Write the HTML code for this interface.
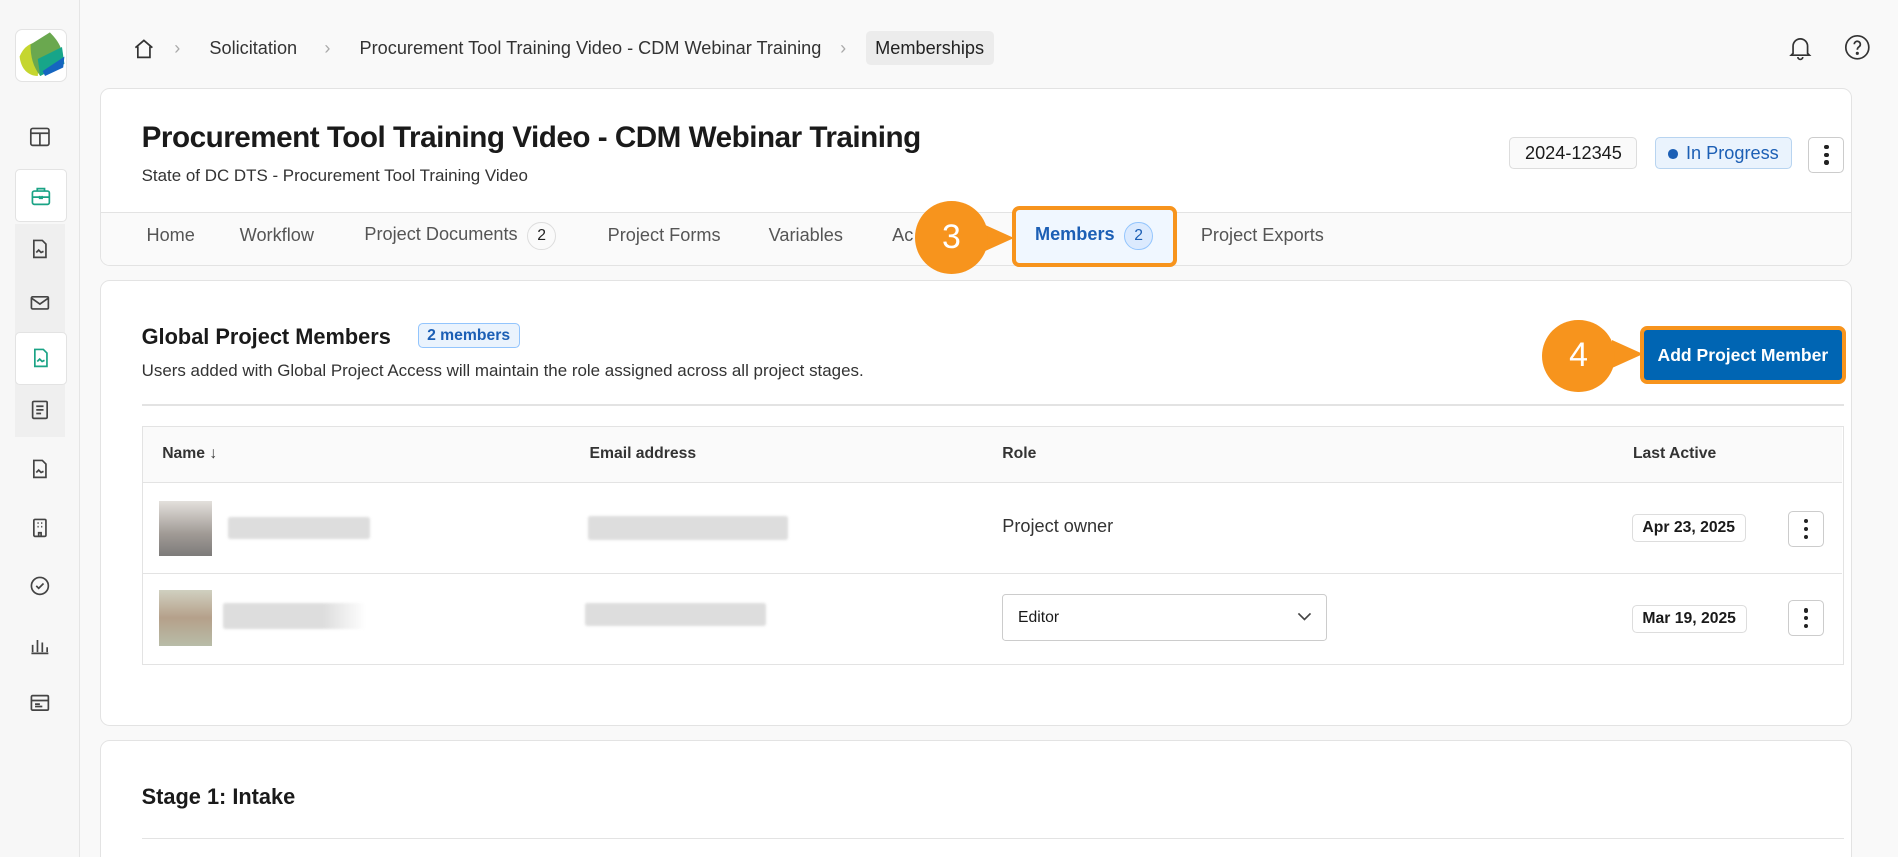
<!DOCTYPE html>
<html><head><meta charset="utf-8"><style>
html,body{margin:0;padding:0;width:1898px;height:857px;overflow:hidden;background:#f9f9f9;font-family:"Liberation Sans",sans-serif;color:#1a1a1a}
#w{zoom:1.2105;width:1568px;height:708px;position:relative}
.a{position:absolute}
.side{left:0;top:0;width:65px;height:708px;background:#f7f7f7;border-right:1px solid #e5e5e5}
.ic{position:absolute;left:12px;width:42px;height:42px;display:flex;align-items:center;justify-content:center}
.ic svg{width:18px;height:18px;fill:none;stroke:#444;stroke-width:1.4}
.card{background:#fff;border:1px solid #e3e3e3;border-radius:8px}
.bc{top:31px;font-size:15px;color:#333}
.tab{top:186px;font-size:15px;color:#555}
.badge{display:inline-block;width:22px;height:22px;border:1px solid #ddd;border-radius:50%;text-align:center;line-height:22px;font-size:13px;margin-left:8px;color:#222}
.th{top:368px;font-size:13px;font-weight:bold;color:#333}
.blur{background:#ddd;border-radius:2px;filter:blur(1px)}
.date{font-size:13px;font-weight:bold;border:1px solid #ddd;border-radius:4px;padding:3px 8px;background:#fff}
.dots{width:28px;height:28px;border:1px solid #ccc;border-radius:4px;background:#fff;display:flex;flex-direction:column;align-items:center;justify-content:center;gap:3px}
.dots i{width:3.5px;height:3.5px;background:#222;border-radius:50%;display:block}
.pin{background:#f7941d;border-radius:50%;width:60px;height:60px;color:#fff;font-size:28px;display:flex;align-items:center;justify-content:center}
</style></head><body><div id="w">
<div class="a side"></div>
<div class="a" style="left:12px;top:24px;width:42px;height:42px;border:1px solid #e3e3e3;border-radius:6px;background:#fff;overflow:hidden">
<svg width="42" height="42" viewBox="0 0 42 42"><path d="M3 22 C6 14 12 10 20 10 L18 38 C10 38 4 32 3 22Z" fill="#c5d62f"/><path d="M12 12 L28 2 C36 10 40 18 38 28 L20 38 C14 30 12 22 12 12Z" fill="#6aa84f"/><path d="M18 24 L38 14 L40 28 L20 38Z" fill="#17a589"/><path d="M22 34 L40 22 L39 31 L24 38Z" fill="#1565c0"/></svg></div>
<div class="ic" style="top:92px"><svg viewBox="0 0 18 18"><rect x="1.5" y="2" width="15" height="14" rx="1.5"/><path d="M1.5 6h15M9 6v10"/></svg></div>
<div class="ic" style="top:140px;background:#fff;border:1px solid #e3e3e3;border-radius:4px"><svg viewBox="0 0 18 18" style="stroke:#1aa385"><rect x="2" y="5" width="14" height="11" rx="1.5"/><path d="M6 5V3h6v2M2 10h14M8 9v2h2V9"/></svg></div>
<div class="a" style="left:12px;top:185px;width:42px;height:176px;background:#efefef"></div>
<div class="ic" style="top:185px"><svg viewBox="0 0 18 18"><path d="M4 2h7l3 3v11H4z M6 12l2-2 2 2 2-1"/></svg></div>
<div class="ic" style="top:229px"><svg viewBox="0 0 18 18"><rect x="2" y="4" width="14" height="10" rx="1"/><path d="M2 5l7 5 7-5"/></svg></div>
<div class="ic" style="top:274px;background:#fff;border:1px solid #e3e3e3;border-radius:4px"><svg viewBox="0 0 18 18" style="stroke:#1aa385"><path d="M4 2h7l3 3v11H4z M6 12l2-2 2 2 2-1"/></svg></div>
<div class="ic" style="top:318px"><svg viewBox="0 0 18 18"><rect x="3" y="2" width="12" height="14" rx="1"/><path d="M6 6h6M6 9h6M6 12h4"/></svg></div>
<div class="ic" style="top:366px"><svg viewBox="0 0 18 18"><path d="M4 2h7l3 3v11H4z M6 12l2-2 2 2 2-1"/></svg></div>
<div class="ic" style="top:415px"><svg viewBox="0 0 18 18"><rect x="4" y="2" width="10" height="14" rx="1"/><path d="M7 5h1M10 5h1M7 8h1M10 8h1M8 16v-3h2v3"/></svg></div>
<div class="ic" style="top:463px"><svg viewBox="0 0 18 18"><circle cx="9" cy="9" r="7"/><path d="M6 9l2 2 4-4"/></svg></div>
<div class="ic" style="top:512px"><svg viewBox="0 0 18 18"><path d="M3 15V9M7 15V5M11 15V7M15 15V11M2 16h14"/></svg></div>
<div class="ic" style="top:560px"><svg viewBox="0 0 18 18"><rect x="2" y="3" width="14" height="12" rx="1"/><path d="M2 7h14M5 10h4M5 12h6"/></svg></div>

<svg class="a" style="left:110px;top:31px" width="18" height="18" viewBox="0 0 18 18" fill="none" stroke="#333" stroke-width="1.4"><path d="M2 8l7-6 7 6M4 7v9h10V7"/></svg>
<div class="a bc" style="left:144px;color:#aaa">›</div>
<div class="a bc" style="left:173px">Solicitation</div>
<div class="a bc" style="left:268px;color:#aaa">›</div>
<div class="a bc" style="left:297px">Procurement Tool Training Video - CDM Webinar Training</div>
<div class="a bc" style="left:694px;color:#aaa">›</div>
<div class="a" style="left:715px;top:26px;padding:5px 8px;background:#ececec;border-radius:4px;font-size:15px;color:#222">Memberships</div>
<svg class="a" style="left:1476px;top:28px" width="22" height="22" viewBox="0 0 22 22" fill="none" stroke="#333" stroke-width="1.4"><path d="M5 16V10a6 6 0 0112 0v6l1.5 1.5h-15zM9 19a2 2 0 004 0"/></svg>
<svg class="a" style="left:1523px;top:28px" width="22" height="22" viewBox="0 0 22 22" fill="none" stroke="#333" stroke-width="1.4"><circle cx="11" cy="11" r="9.5"/><path d="M8.5 8.5a2.5 2.5 0 114 2c-1 .7-1.5 1.2-1.5 2.5"/><circle cx="11" cy="16" r=".6" fill="#333"/></svg>

<div class="a card" style="left:83px;top:73px;width:1445px;height:145px;overflow:hidden">
<div style="position:absolute;left:0;right:0;top:101px;bottom:0;background:#fafafa;border-top:1px solid #e3e3e3"></div></div>
<div class="a" style="left:117px;top:100px;font-size:24.5px;font-weight:bold;letter-spacing:-.4px">Procurement Tool Training Video - CDM Webinar Training</div>
<div class="a" style="left:117px;top:137px;font-size:14px;color:#333">State of DC DTS - Procurement Tool Training Video</div>
<div class="a" style="left:1247px;top:113px;padding:4px 12px;border:1px solid #ddd;border-radius:4px;font-size:15px;background:#fafafa">2024-12345</div>
<div class="a" style="left:1367px;top:113px;padding:4px 10px;border:1px solid #b8d4f0;border-radius:4px;font-size:15px;background:#eaf3fd;color:#1c5fb5"><span style="display:inline-block;width:8px;height:8px;border-radius:50%;background:#1c5fb5;margin-right:7px"></span>In Progress</div>
<div class="a dots" style="left:1494px;top:113px"><i></i><i></i><i></i></div>
<div class="a tab" style="left:121px">Home</div>
<div class="a tab" style="left:198px">Workflow</div>
<div class="a tab" style="left:301px;top:183px">Project Documents<span class="badge">2</span></div>
<div class="a tab" style="left:502px">Project Forms</div>
<div class="a tab" style="left:635px">Variables</div>
<div class="a tab" style="left:737px">Ac</div>
<div class="a tab" style="left:992px">Project Exports</div>
<div class="a" style="left:836px;top:170px;width:130px;height:44px;border:4px solid #f7941d;border-radius:6px;background:#f0f7ff"></div>
<div class="a" style="left:855px;top:183px;font-size:15px;font-weight:bold;color:#1c5fb5">Members<span class="badge" style="background:#dbeafe;border-color:#93c5fd;color:#1c5fb5;font-weight:normal">2</span></div>
<div class="a" style="left:812px;top:185px;width:0;height:0;border-top:12px solid transparent;border-bottom:12px solid transparent;border-left:26px solid #f7941d"></div>
<div class="a pin" style="left:756px;top:166px">3</div>

<div class="a card" style="left:83px;top:231px;width:1445px;height:367px"></div>
<div class="a" style="left:117px;top:268px;font-size:18px;font-weight:bold">Global Project Members</div>
<div class="a" style="left:345px;top:267px;padding:2px 7px;border:1px solid #93c5fd;background:#eaf3fd;border-radius:4px;font-size:13px;color:#1c5fb5;font-weight:bold">2 members</div>
<div class="a" style="left:117px;top:298px;font-size:14px;color:#333">Users added with Global Project Access will maintain the role assigned across all project stages.</div>
<div class="a" style="left:117px;top:334px;width:1406px;height:1px;background:#e3e3e3"></div>
<div class="a" style="left:1355px;top:269px;width:163px;height:42px;border:4px solid #f7941d;border-radius:6px;background:#0065b3;display:flex;align-items:center;justify-content:center;font-size:14.5px;font-weight:bold;color:#fff">Add Project Member</div>
<div class="a" style="left:1332px;top:281px;width:0;height:0;border-top:12px solid transparent;border-bottom:12px solid transparent;border-left:26px solid #f7941d"></div>
<div class="a pin" style="left:1274px;top:264px">4</div>

<div class="a" style="left:117px;top:352px;width:1405px;height:196px;border:1px solid #e3e3e3;background:#fff"></div>
<div class="a" style="left:118px;top:353px;width:1404px;height:45px;background:#fafafa;border-bottom:1px solid #e3e3e3"></div>
<div class="a th" style="left:134px">Name ↓</div>
<div class="a th" style="left:487px">Email address</div>
<div class="a th" style="left:828px">Role</div>
<div class="a th" style="left:1349px">Last Active</div>
<div class="a" style="left:118px;top:473px;width:1404px;height:1px;background:#e3e3e3"></div>
<div class="a" style="left:131px;top:414px;width:44px;height:45px;background:linear-gradient(#e3e0dc,#a09a95 60%,#7d7b7a)"></div>
<div class="a blur" style="left:188px;top:427px;width:118px;height:18px"></div>
<div class="a blur" style="left:486px;top:426px;width:165px;height:20px"></div>
<div class="a" style="left:828px;top:426px;font-size:15px;color:#333">Project owner</div>
<div class="a date" style="left:1348px;top:425px">Apr 23, 2025</div>
<div class="a dots" style="left:1477px;top:422px"><i></i><i></i><i></i></div>
<div class="a" style="left:131px;top:487px;width:44px;height:47px;background:linear-gradient(#d0d0c0,#b5a08a 50%,#b8bca8)"></div>
<div class="a blur" style="left:184px;top:498px;width:118px;height:22px;background:linear-gradient(90deg,#ddd 70%,#fff)"></div>
<div class="a blur" style="left:483px;top:498px;width:150px;height:19px"></div>
<div class="a" style="left:828px;top:491px;width:267px;height:37px;border:1px solid #ccc;border-radius:3px;background:#fff"></div>
<div class="a" style="left:841px;top:503px;font-size:13px">Editor</div>
<svg class="a" style="left:1071px;top:505px" width="14" height="10" viewBox="0 0 14 10" fill="none" stroke="#444" stroke-width="1.4"><path d="M2 2l5 5 5-5"/></svg>
<div class="a date" style="left:1348px;top:500px">Mar 19, 2025</div>
<div class="a dots" style="left:1477px;top:496px"><i></i><i></i><i></i></div>

<div class="a card" style="left:83px;top:611px;width:1445px;height:120px"></div>
<div class="a" style="left:117px;top:648px;font-size:18px;font-weight:bold">Stage 1: Intake</div>
<div class="a" style="left:117px;top:692px;width:1406px;height:1px;background:#e3e3e3"></div>
</div></body></html>
